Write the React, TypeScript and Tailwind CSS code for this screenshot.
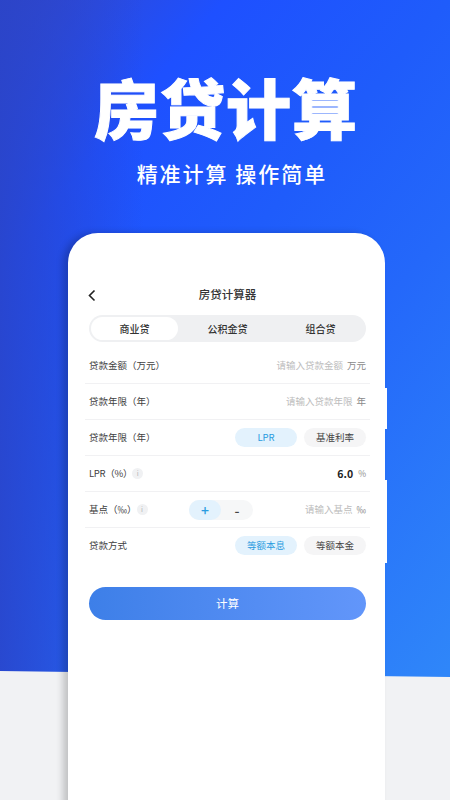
const font = "font-['Noto_Sans_CJK_SC','Noto_Sans',sans-serif]";

function InfoDot() {
  return (
    <span className="flex h-[11px] w-[11px] items-center justify-center rounded-full bg-[#f0f1f3] text-[7px] leading-none text-[#b5b5b5]">
      i
    </span>
  );
}

function Pill({ label, active }: { label: string; active?: boolean }) {
  return (
    <div
      className={
        active
          ? 'flex h-[19px] w-[62px] items-center justify-center rounded-full bg-[#e3f2fd] text-[9.5px] text-[#2a9be0]'
          : 'flex h-[19px] w-[62px] items-center justify-center rounded-full bg-[#f5f5f6] text-[9.5px] text-[#444444]'
      }>
      {label}
    </div>
  );
}

function Row({
  children,
  border = true,
}: {
  children: React.ReactNode;
  border?: boolean;
}) {
  return (
    <div
      className={
        border
          ? 'flex h-[36px] items-center justify-between border-b border-[#f1f1f3] px-[4px] text-[9.5px] text-[#3f3f3f]'
          : '-mt-[1px] flex h-[36px] items-center justify-between px-[4px] text-[9.5px] text-[#3f3f3f]'
      }>
      {children}
    </div>
  );
}

export default function App() {
  return (
    <div
      className={`relative h-[800px] w-[450px] overflow-hidden bg-[linear-gradient(90deg,#2a44c8d9_0%,#2a44c800_32%),linear-gradient(130deg,#3547c9_0%,#1e50ff_20%,#1f5cfb_40%,#2468fa_57%,#2f86f9_90%)] ${font}`}>
      {/* bottom light band */}
      <div className="absolute inset-x-0 bottom-0 h-[130px] bg-[#f1f2f4] [clip-path:polygon(0_1px,100%_7px,100%_100%,0_100%)]" />

      <div className="relative flex flex-col items-center">
        <h1 className="ml-[2px] mt-[62px] text-[65px] font-black leading-[88px] tracking-[1px] text-white [-webkit-text-stroke:1px_white]">
          房贷计算
        </h1>
        <p className="ml-[14px] mt-[7px] text-[21px] font-medium leading-[32px] tracking-[2px] text-white">
          精准计算 操作简单
        </p>

        {/* phone */}
        <div className="relative ml-[3px] mt-[44px] h-[600px] w-[317px] rounded-t-[30px] bg-white pl-[17px] pr-[15px] pt-[52px] shadow-[-5px_0_7px_rgba(0,0,0,0.2)]">
          {/* side buttons */}
          <div className="absolute -right-[2px] top-[155px] h-[41px] w-[2px] bg-white" />
          <div className="absolute -right-[2px] top-[247px] h-[83px] w-[2px] bg-white" />

          <div className="relative flex h-[20px] items-center justify-center">
            <svg
              className="absolute left-[2px] top-[4px]"
              width="10"
              height="13"
              viewBox="0 0 10 13"
              fill="none">
              <path d="M7.5 1.5 2.5 6.5l5 5" stroke="#222222" strokeWidth="1.6" />
            </svg>
            <span className="text-[11.5px] font-medium text-[#333333]">房贷计算器</span>
          </div>

          <div className="mx-[4px] mt-[10px] flex h-[27px] items-center rounded-full bg-[#eff0f2] px-[2px] text-[10px] font-medium text-[#333333]">
            <div className="flex h-[23px] w-[87px] items-center justify-center rounded-full bg-white">
              商业贷
            </div>
            <div className="flex-1 text-center">公积金贷</div>
            <div className="w-[87px] text-center">组合贷</div>
          </div>

          <div className="mt-[6px]">
            <Row>
              <span>贷款金额（万元）</span>
              <span className="flex items-center gap-[4px] text-[#bdbdbd]">
                请输入贷款金额 <span className="text-[#8a8a8a]">万元</span>
              </span>
            </Row>
            <Row>
              <span>贷款年限（年）</span>
              <span className="flex items-center gap-[4px] text-[#bdbdbd]">
                请输入贷款年限 <span className="text-[#8a8a8a]">年</span>
              </span>
            </Row>
            <Row>
              <span>贷款年限（年）</span>
              <div className="flex gap-[7px]">
                <Pill label="LPR" active />
                <Pill label="基准利率" />
              </div>
            </Row>
            <Row>
              <span className="flex items-center tracking-[-0.3px]">
                LPR（%）
                <InfoDot />
              </span>
              <span className="flex items-center gap-[5px] text-[8.5px] text-[#8a8a8a]">
                <span className="text-[10.5px] font-bold text-[#222222]">6.0</span> %
              </span>
            </Row>
            <Row>
              <span className="flex items-center">
                基点（‰）
                <InfoDot />
              </span>
              <div className="flex items-center">
                <div className="mr-[52px] flex h-[20px] w-[64px] items-center rounded-full bg-[#f6f7f8] text-[14px] font-medium leading-none">
                  <span className="flex h-[20px] w-[32px] items-center justify-center rounded-full bg-[#e3f2fd] text-[#2a9be0]">
                    +
                  </span>
                  <span className="flex-1 text-center text-[#444444]">-</span>
                </div>
                <span className="flex items-center gap-[4px] text-[#bdbdbd]">
                  请输入基点 <span className="text-[#8a8a8a]">‰</span>
                </span>
              </div>
            </Row>
            <Row border={false}>
              <span>贷款方式</span>
              <div className="flex gap-[7px]">
                <Pill label="等额本息" active />
                <Pill label="等额本金" />
              </div>
            </Row>
          </div>

          <button className="ml-[4px] mt-[24px] flex h-[33px] w-[277px] items-center justify-center rounded-full bg-gradient-to-r from-[#3d7fe8] to-[#6296fa] text-[11.5px] text-white">
            计算
          </button>
        </div>
      </div>
    </div>
  );
}
